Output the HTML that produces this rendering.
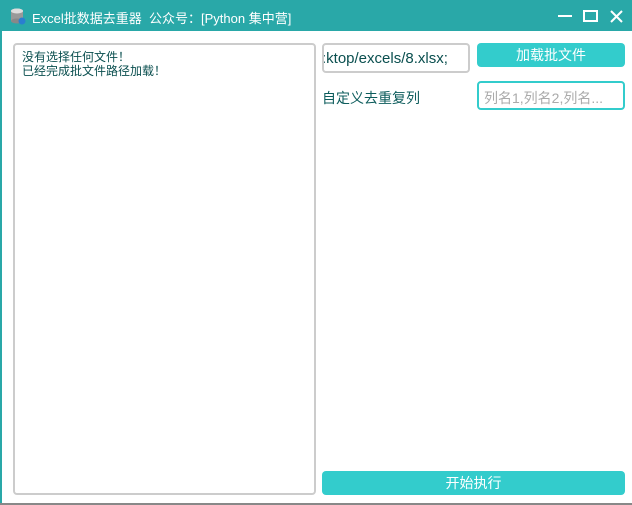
<!DOCTYPE html>
<html><head><meta charset="utf-8"><style>
*{margin:0;padding:0;box-sizing:border-box}
body{width:632px;height:505px;position:relative;background:#fff;font-family:"Liberation Sans","Noto Sans CJK SC",sans-serif;overflow:hidden}
.tb{position:absolute;left:0;top:0;width:632px;height:31px;background:#29a8a8;color:#fff;font-size:13px}
.lb{position:absolute;left:0;top:31px;width:2px;height:474px;background:#29a8a8}
.bb{position:absolute;left:0;top:503px;width:632px;height:2px;background:#888}
.ta{position:absolute;left:13px;top:43px;width:303px;height:452px;border:2px solid #ccc;border-radius:4px;padding:5px 7px;font-size:12px;line-height:14px;color:#0a4f4f}
.in{position:absolute;border:2px solid #ccc;border-radius:4px;font-size:15px;color:#0a4f4f;overflow:hidden;white-space:nowrap}
.btn{position:absolute;background:#33cccc;border-radius:4px;color:#fff;font-size:14px;text-align:center}
</style></head><body>
<div class="tb">
<svg style="position:absolute;left:9px;top:7px" width="18" height="18" viewBox="0 0 18 18"><ellipse cx="8" cy="4" rx="6" ry="2.5" fill="#bbb"/><rect x="2" y="4" width="12" height="10" fill="#999"/><ellipse cx="8" cy="14" rx="6" ry="2.5" fill="#888"/><ellipse cx="8" cy="4" rx="6" ry="2.5" fill="#ddd"/><circle cx="13" cy="14" r="3.5" fill="#2a7fd0"/></svg>
<span style="position:absolute;left:32px;top:8px">Excel批数据去重器&nbsp; 公众号：[Python 集中营]</span>
<div style="position:absolute;left:558px;top:15px;width:14px;height:2px;background:#fff"></div>
<div style="position:absolute;left:583px;top:10px;width:15px;height:12px;border:2px solid #fff"></div>
<svg style="position:absolute;left:610px;top:10px" width="13" height="13"><path d="M1 1L12 12M12 1L1 12" stroke="#fff" stroke-width="2"/></svg>
</div>
<div class="lb"></div><div class="bb"></div>
<div class="ta">没有选择任何文件！<br>已经完成批文件路径加载！</div>
<div class="in" style="left:322px;top:43px;width:148px;height:30px;padding:5px 0 0 0"><span style="margin-left:-2px">:ktop/excels/8.xlsx;</span></div>
<div class="btn" style="left:477px;top:43px;width:148px;height:24px;line-height:24px">加载批文件</div>
<div style="position:absolute;left:322px;top:88px;font-size:14px;color:#0d5c5c">自定义去重复列</div>
<div class="in" style="left:477px;top:81px;width:148px;height:29px;border-color:#33cccc;color:#aaa;font-size:14px;padding:5px 0 0 5px">列名1,列名2,列名...</div>
<div class="btn" style="left:322px;top:471px;width:303px;height:24px;line-height:24px">开始执行</div>
</body></html>
